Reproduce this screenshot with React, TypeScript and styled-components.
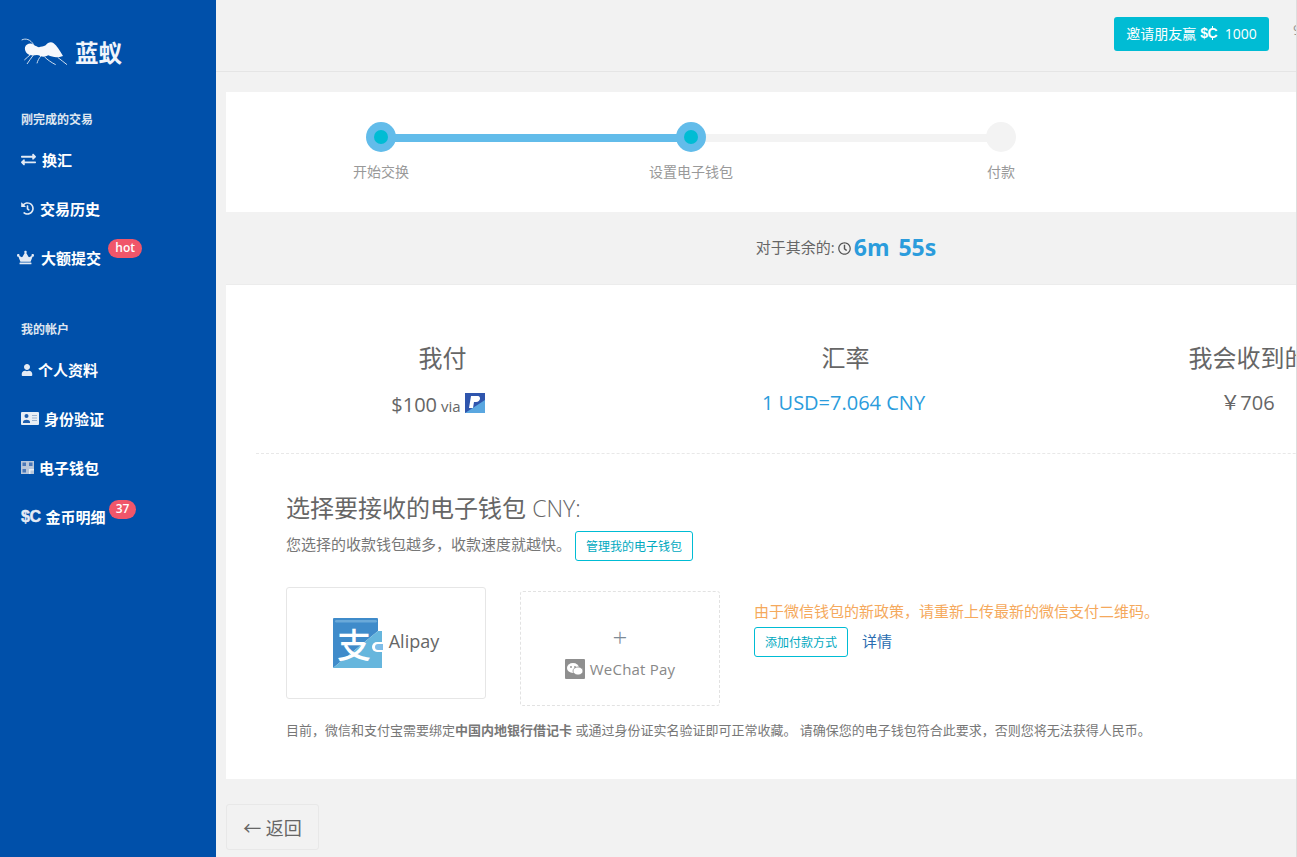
import styled, { createGlobalStyle } from 'styled-components';
import { FaCrown, FaExchangeAlt, FaHistory, FaRegClock, FaUser } from 'react-icons/fa';

const GlobalStyle = createGlobalStyle`
  html,
  body {
    margin: 0;
    padding: 0;
    height: 100%;
    overflow: hidden;
    background: #f2f2f2;
  }
  * {
    box-sizing: border-box;
  }
  body {
    font-family: 'Open Sans', 'Noto Sans CJK SC', sans-serif;
    color: #666;
  }
`;

const Page = styled.div`
  position: relative;
  display: flex;
  width: 1297px;
  height: 857px;
  overflow: hidden;

  &::after {
    content: '';
    position: absolute;
    top: 0;
    right: 0;
    bottom: 0;
    width: 1px;
    background: #dedede;
  }
`;

const Sidebar = styled.aside`
  flex: 0 0 216px;
  background: #0050aa;
  color: #fff;
  display: flex;
  flex-direction: column;
`;

const Logo = styled.div`
  height: 105px;
  padding: 33px 0 0 20px;
  display: flex;
  align-items: flex-start;
  gap: 7px;

  span {
    font-size: 23.5px;
    font-weight: 700;
    line-height: 40px;
    color: #f1f5fb;
  }
`;

const GroupLabel = styled.div<{ $top?: number }>`
  font-size: 12px;
  font-weight: 700;
  color: #dfe6f0;
  line-height: 30px;
  padding-left: 21px;
  margin-top: ${(p) => p.$top ?? 0}px;
`;

const NavList = styled.ul`
  list-style: none;
  margin: 0;
  padding: 0;
`;

const NavItem = styled.li<{ $left?: number; $gap?: number }>`
  display: flex;
  align-items: center;
  height: 49px;
  padding-left: ${(p) => p.$left ?? 21}px;
  gap: ${(p) => p.$gap ?? 6}px;
  font-size: 15px;
  font-weight: 700;
  color: #fff;

  svg {
    color: #e4ebf5;
    flex: none;
  }
`;

const NavLabel = styled.span`
  position: relative;
`;

const Badge = styled.span<{ $right: number; $top: number }>`
  position: absolute;
  right: ${(p) => p.$right}px;
  top: ${(p) => p.$top}px;
  height: 19px;
  padding: 0 7px;
  border-radius: 10px;
  background: #f0566a;
  color: #fff;
  font-size: 12px;
  font-weight: 600;
  line-height: 17px;
`;

const CoinMark = styled.b`
  font-family: 'Liberation Sans', sans-serif;
  font-weight: 700;
  letter-spacing: -0.5px;
`;

const CoinC = styled.span`
  position: relative;
  display: inline-block;
  line-height: 1;

  &::before,
  &::after {
    content: '';
    position: absolute;
    left: 45%;
    width: 1.5px;
    height: 2px;
    background: currentColor;
  }
  &::before {
    top: 0;
  }
  &::after {
    bottom: 0;
  }
`;

const SideCoin = styled(CoinMark)`
  font-size: 16px;
  color: #e4ebf5;
  letter-spacing: -0.5px;
  -webkit-text-stroke: 0.4px #e4ebf5;
`;

const Main = styled.main`
  flex: 1;
  min-width: 0;
  background: #f2f2f2;
`;

const Topbar = styled.header`
  height: 72px;
  border-bottom: 1px solid #e5e5e5;
  padding: 17px 0 0 898px;
  display: flex;
  align-items: flex-start;
  white-space: nowrap;
`;

const InviteButton = styled.button`
  flex: none;
  width: 155px;
  height: 34px;
  border: none;
  border-radius: 3px;
  background: #00bcd4;
  color: #fff;
  font-family: inherit;
  font-size: 14px;
  display: flex;
  align-items: center;
  justify-content: center;
  gap: 4px;
  padding: 0 0 2px;
`;

const TopbarMore = styled.span`
  margin: 3px 0 0 24px;
  font-size: 14px;
  color: #999;
`;

const Content = styled.div`
  padding: 20px 0 0 10px;
  width: 1265px;
`;

const StepCard = styled.section`
  display: flex;
  height: 120px;
  background: #fff;
  padding-top: 30px;
`;

const Step = styled.div<{ $line?: 'done' | 'todo' }>`
  position: relative;
  flex: 0 0 310px;
  display: flex;
  flex-direction: column;
  align-items: center;
  gap: 11px;
  font-size: 14px;
  line-height: 18px;
  color: #999;

  &::before {
    content: '';
    display: ${(p) => (p.$line ? 'block' : 'none')};
    position: absolute;
    left: 155px;
    top: 12px;
    width: 310px;
    height: 8px;
    background: ${(p) => (p.$line === 'done' ? '#62bcea' : '#f3f3f3')};
  }
`;

const StepDot = styled.span<{ $active?: boolean }>`
  position: relative;
  width: 30px;
  height: 30px;
  border-radius: 50%;
  background: ${(p) => (p.$active ? '#62bcea' : '#f3f3f3')};
  display: flex;
  align-items: center;
  justify-content: center;

  &::after {
    content: '';
    display: ${(p) => (p.$active ? 'block' : 'none')};
    width: 14px;
    height: 14px;
    border-radius: 50%;
    background: #00bcd4;
  }
`;

const Timer = styled.div`
  height: 72px;
  display: flex;
  align-items: center;
  justify-content: center;
  padding: 0 15px 3px 0;
  font-size: 15px;
  color: #666;
  gap: 3px;

  svg {
    color: #555;
    margin-top: 3px;
  }
`;

const TimerValue = styled.strong`
  font-size: 23px;
  font-weight: 700;
  color: #2b9cdc;
  word-spacing: 3px;
  line-height: 30px;
`;

const MainCard = styled.section`
  background: #fff;
  height: 495px;
  padding: 0 0 0 30px;
  border-top: 1px solid #ececec;
`;

const Summary = styled.div`
  display: flex;
  margin-left: -15px;
  height: 168px;
`;

const SummaryCol = styled.div`
  flex: 0 0 403px;
  text-align: center;
  padding-top: 55px;
  white-space: nowrap;
`;

const SummaryTitle = styled.div`
  font-size: 24px;
  line-height: 36px;
  color: #666;
`;

const SummaryValue = styled.div<{ $accent?: boolean; $shift?: number }>`
  margin-top: 13px;
  padding-right: ${(p) => p.$shift ?? 2}px;
  font-size: 20px;
  line-height: 28px;
  color: ${(p) => (p.$accent ? '#2b9cdc' : '#666')};
  display: flex;
  justify-content: center;
  align-items: center;
  gap: 4px;

  small {
    font-size: 15px;
    margin-top: 3px;
  }
`;

const PaypalIcon = styled.svg`
  margin-top: -3px;
`;

const Divider = styled.hr`
  margin: 0;
  border: none;
  border-top: 1px dashed #e8e8e8;
`;

const WalletSection = styled.div`
  padding: 36px 0 0 30px;
`;

const WalletTitle = styled.h2`
  margin: 0;
  font-size: 24px;
  font-weight: 400;
  line-height: 36px;
  color: #666;

  span {
    font-weight: 300;
    font-size: 23px;
  }
`;

const WalletHint = styled.div`
  display: flex;
  align-items: center;
  gap: 4px;
  margin-top: 5px;
  color: #777;
`;

const HintText = styled.span`
  font-size: 15px;
  margin-bottom: 5px;
`;

const OutlineButton = styled.button`
  height: 30px;
  padding: 0 10px;
  border: 1px solid #00bcd4;
  border-radius: 3px;
  background: #fff;
  color: #00a9c0;
  font-family: inherit;
  font-size: 12px;
`;

const WalletRow = styled.div`
  display: flex;
  align-items: flex-start;
  margin-top: 26px;
`;

const WalletCard = styled.div`
  width: 200px;
  height: 112px;
  border: 1px solid #e6e6e6;
  border-radius: 3px;
  display: flex;
  align-items: center;
  justify-content: center;
  gap: 6px;
  font-size: 18px;
  color: #666;

  span {
    margin-bottom: 4px;
  }
`;

const AddCard = styled.div`
  width: 200px;
  height: 115px;
  margin: 4px 0 0 34px;
  padding-top: 6px;
  border: 1px dashed #e2e2e2;
  border-radius: 3px;
  display: flex;
  flex-direction: column;
  align-items: center;
  justify-content: center;
  color: #888;
  font-size: 15px;
  letter-spacing: 0.2px;
`;

const Plus = styled.div`
  font-size: 26px;
  font-weight: 300;
  line-height: 30px;
  color: #7d8a96;
`;

const AddName = styled.div`
  display: flex;
  align-items: center;
  gap: 5px;
  margin-top: 5px;
  line-height: 24px;
`;

const PolicyBlock = styled.div`
  margin: 13px 0 0 34px;
`;

const PolicyNote = styled.div`
  font-size: 15px;
  line-height: 22px;
  color: #f5a95c;
`;

const PolicyActions = styled.div`
  display: flex;
  align-items: center;
  gap: 14px;
  margin-top: 5px;
`;

const DetailLink = styled.a`
  font-size: 15px;
  color: #2a6db0;
  margin-top: -3px;
`;

const Footnote = styled.p`
  margin: 15px 0 0;
  font-size: 13px;
  line-height: 18px;
  color: #777;
  white-space: nowrap;
`;

const BackButton = styled.button`
  display: block;
  margin: 25px 0 0;
  width: 93px;
  height: 46px;
  border: 1px solid #e8e8e8;
  border-radius: 3px;
  background: #f2f2f2;
  color: #666;
  font-family: inherit;
  font-size: 18px;
  padding: 0;
`;

const AntLogo = () => (
  <svg width="48" height="33" viewBox="15 3 144 99" fill="none">
    <path d="M20 24 C32 18 46 22 56 38" stroke="#cfdeef" strokeWidth="3" />
    <path
      d="M30 46 C34 34 48 32 56 38 C62 42 68 44 72 46 C78 44 86 44 92 40 C98 32 108 28 116 34 C126 42 134 56 144 72 C128 78 112 76 100 70 C92 74 84 76 76 72 C66 66 58 72 48 70 C36 68 28 58 30 46 Z"
      fill="#f6f8fc"
    />
    <path
      d="M56 68 C48 78 42 88 36 96 M46 68 C40 74 34 78 28 84 M78 72 C72 78 68 86 66 94 M88 74 C98 84 110 92 122 98 M128 76 C138 84 146 90 156 98"
      stroke="#cfdeef"
      strokeWidth="3"
    />
  </svg>
);

const IdCardIcon = () => (
  <svg width="18" height="13" viewBox="0 0 18 13">
    <rect width="18" height="13" rx="1" fill="#e8eef5" />
    <circle cx="5.5" cy="4" r="2" fill="#1f5fae" />
    <path d="M2 10 C2 7 9 7 9 10 V11 H2 Z" fill="#1f5fae" />
    <path d="M11 3.5 H16 M11 6 H16 M11 8.5 H16" stroke="#9db4cf" strokeWidth="1" />
  </svg>
);

const QrIcon = () => (
  <svg width="13" height="13" viewBox="0 0 13 13">
    <rect width="13" height="13" fill="#b9c7da" />
    <rect x="1.5" y="1.5" width="3.5" height="3.5" fill="#4a78b8" />
    <rect x="8" y="1.5" width="3.5" height="3.5" fill="#4a78b8" />
    <rect x="1.5" y="8" width="3.5" height="3.5" fill="#4a78b8" />
    <path d="M8 8 H13 V9.5 H9.5 V13 H8 Z" fill="#e8eef5" />
  </svg>
);

const PaypalMark = () => (
  <PaypalIcon width="20" height="20" viewBox="0 0 20 20">
    <rect width="20" height="20" fill="#2f55ad" />
    <path d="M20 7 V20 H0 Z" fill="#5aa7e0" />
    <path d="M6 3 H13 C16 3 16 9 11 9 H9 L8 15 H4 Z" fill="#fff" />
  </PaypalIcon>
);

const AlipayMark = () => (
  <svg width="50" height="50" viewBox="0 0 50 50">
    <path d="M0 1 Q0 0 1 0 H44 Q45 0 45 1 V13 L0 50 Z" fill="#3f8bca" />
    <path d="M0 50 L45 13 L49 13 V50 Z" fill="#66b6dd" />
    <rect x="2" y="2" width="42" height="2.5" rx="1.2" fill="#6aa9d9" />
    <text
      x="4"
      y="40"
      fontSize="34"
      fontWeight="500"
      fill="#fff"
      fontFamily="'Noto Sans CJK SC', sans-serif"
    >
      支
    </text>
    <path d="M50 24 H44 A5 5 0 0 0 44 34 H50 Z" fill="#fff" />
    <path d="M50 26 H45 A3 3 0 0 0 45 32 H50 Z" fill="#7fbde8" />
  </svg>
);

const WechatMark = () => (
  <svg width="20" height="20" viewBox="0 0 20 20">
    <rect width="20" height="20" rx="1" fill="#8f8f8f" />
    <ellipse cx="8" cy="9" rx="6" ry="5" fill="#fff" />
    <ellipse cx="13" cy="12" rx="5" ry="4" fill="#fff" stroke="#8f8f8f" strokeWidth="0.8" />
    <circle cx="6" cy="8" r="0.9" fill="#8f8f8f" />
    <circle cx="10" cy="8" r="0.9" fill="#8f8f8f" />
  </svg>
);

const App = () => {
  return (
    <Page>
      <GlobalStyle />
      <Sidebar>
        <Logo>
          <AntLogo />
          <span>蓝蚁</span>
        </Logo>
        <GroupLabel>刚完成的交易</GroupLabel>
        <NavList>
          <NavItem>
            <FaExchangeAlt size={15} />
            <NavLabel>换汇</NavLabel>
          </NavItem>
          <NavItem>
            <FaHistory size={13} />
            <NavLabel>交易历史</NavLabel>
          </NavItem>
          <NavItem $left={17} $gap={7}>
            <FaCrown size={17} />
            <NavLabel>
              大额提交
              <Badge $right={-41} $top={-8}>
                hot
              </Badge>
            </NavLabel>
          </NavItem>
        </NavList>
        <GroupLabel $top={33}>我的帐户</GroupLabel>
        <NavList>
          <NavItem $gap={5}>
            <FaUser size={12} />
            <NavLabel>个人资料</NavLabel>
          </NavItem>
          <NavItem $gap={5}>
            <IdCardIcon />
            <NavLabel>身份验证</NavLabel>
          </NavItem>
          <NavItem $gap={5}>
            <QrIcon />
            <NavLabel>电子钱包</NavLabel>
          </NavItem>
          <NavItem $gap={5}>
            <SideCoin>$C</SideCoin>
            <NavLabel>
              金币明细
              <Badge $right={-31} $top={-6}>
                37
              </Badge>
            </NavLabel>
          </NavItem>
        </NavList>
      </Sidebar>
      <Main>
        <Topbar>
          <InviteButton>
            邀请朋友赢
            <CoinMark>
              $<CoinC>C</CoinC>
            </CoinMark>
            &nbsp;1000
          </InviteButton>
          <TopbarMore>9</TopbarMore>
        </Topbar>
        <Content>
          <StepCard>
            <Step $line="done">
              <StepDot $active />
              开始交换
            </Step>
            <Step $line="todo">
              <StepDot $active />
              设置电子钱包
            </Step>
            <Step>
              <StepDot />
              付款
            </Step>
          </StepCard>
          <Timer>
            对于其余的:
            <FaRegClock size={13} />
            <TimerValue>6m 55s</TimerValue>
          </Timer>
          <MainCard>
            <Summary>
              <SummaryCol>
                <SummaryTitle>我付</SummaryTitle>
                <SummaryValue $shift={9}>
                  $100 <small>via</small>
                  <PaypalMark />
                </SummaryValue>
              </SummaryCol>
              <SummaryCol>
                <SummaryTitle>汇率</SummaryTitle>
                <SummaryValue $accent $shift={4}>
                  1 USD=7.064 CNY
                </SummaryValue>
              </SummaryCol>
              <SummaryCol>
                <SummaryTitle>我会收到的</SummaryTitle>
                <SummaryValue>￥706</SummaryValue>
              </SummaryCol>
            </Summary>
            <Divider />
            <WalletSection>
              <WalletTitle>
                选择要接收的电子钱包 <span>CNY:</span>
              </WalletTitle>
              <WalletHint>
                <HintText>您选择的收款钱包越多，收款速度就越快。</HintText>
                <OutlineButton>管理我的电子钱包</OutlineButton>
              </WalletHint>
              <WalletRow>
                <WalletCard>
                  <AlipayMark />
                  <span>Alipay</span>
                </WalletCard>
                <AddCard>
                  <Plus>+</Plus>
                  <AddName>
                    <WechatMark />
                    WeChat Pay
                  </AddName>
                </AddCard>
                <PolicyBlock>
                  <PolicyNote>由于微信钱包的新政策，请重新上传最新的微信支付二维码。</PolicyNote>
                  <PolicyActions>
                    <OutlineButton>添加付款方式</OutlineButton>
                    <DetailLink>详情</DetailLink>
                  </PolicyActions>
                </PolicyBlock>
              </WalletRow>
              <Footnote>
                目前，微信和支付宝需要绑定<b>中国内地银行借记卡</b>
                {' '}或通过身份证实名验证即可正常收藏。 请确保您的电子钱包符合此要求，否则您将无法获得人民币。
              </Footnote>
            </WalletSection>
          </MainCard>
          <BackButton>← 返回</BackButton>
        </Content>
      </Main>
    </Page>
  );
};

export default App;
